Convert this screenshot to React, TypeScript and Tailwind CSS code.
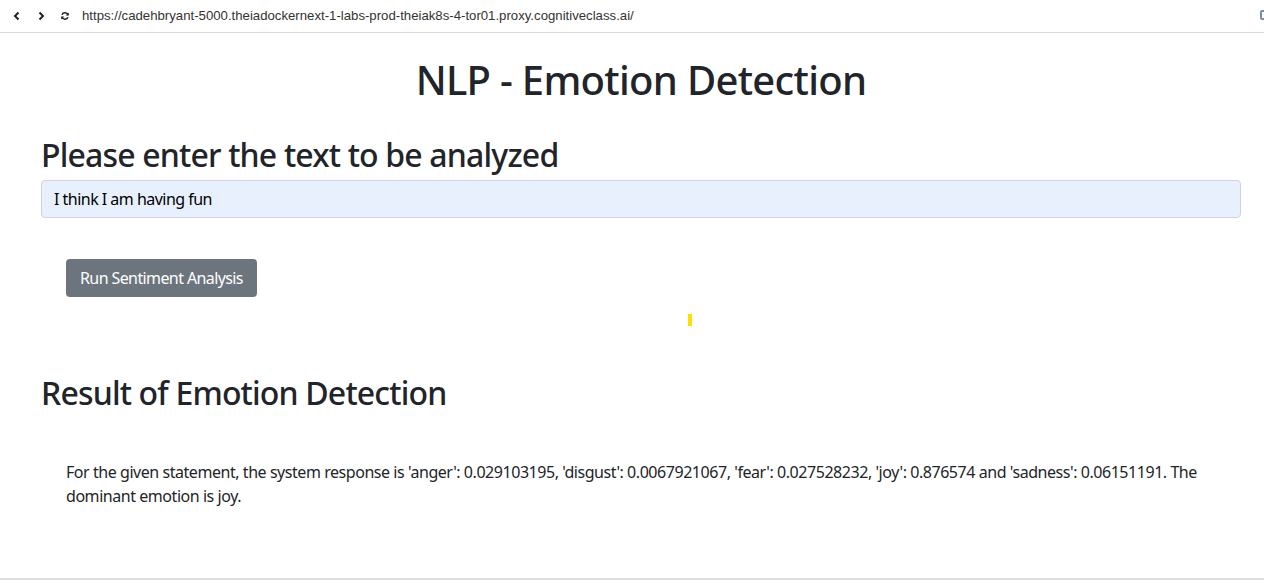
import React from 'react';

const font = { fontFamily: '"Noto Sans", "Open Sans", sans-serif' };

const BrowserBar: React.FC = () => (
  <div className="h-[33px] border-b border-[#dadada] flex items-center relative bg-white">
    <div className="flex items-center pl-[12px] gap-[14px] text-[#333]">
      <svg width="10" height="10" viewBox="0 0 10 10"><path d="M6.5 1.5 3 5l3.5 3.5" fill="none" stroke="#222" strokeWidth="2" /></svg>
      <svg width="10" height="10" viewBox="0 0 10 10"><path d="M3.5 1.5 7 5 3.5 8.5" fill="none" stroke="#222" strokeWidth="2" /></svg>
      <svg width="10" height="10" viewBox="0 0 10 10">
        <path d="M8 4A3.2 3.2 0 0 0 2 3.8" fill="none" stroke="#222" strokeWidth="1.6" />
        <path d="M2 6a3.2 3.2 0 0 0 6 .2" fill="none" stroke="#222" strokeWidth="1.6" />
        <path d="M8.8 1.5v3H5.8z" fill="#222" />
        <path d="M1.2 8.5v-3h3z" fill="#222" />
      </svg>
    </div>
    <span className="ml-[12px] text-[13.2px] text-[#333]" style={{ fontFamily: '"Liberation Sans", sans-serif' }}>
      https://cadehbryant-5000.theiadockernext-1-labs-prod-theiak8s-4-tor01.proxy.cognitiveclass.ai/
    </span>
    <div className="absolute right-[-6px] top-[10px] w-[10px] h-[10px] border-2 border-[#7a8aa8] rounded-[2px]" />
  </div>
);

export default function App() {
  return (
    <div className="w-[1264px] h-[588px] bg-white flex flex-col overflow-hidden text-[#212529]" style={font}>
      <BrowserBar />
      <div className="flex-1 pl-[41px] pr-[23px] border-b-2 border-[#dedede]">
        <h1 className="text-center text-[40px] font-medium leading-[1.2] mt-[23px] tracking-[-0.7px]">NLP - Emotion Detection</h1>
        <h2 className="text-[32px] font-medium leading-[1.2] mt-[32px] mb-[6px] tracking-[-0.83px]">Please enter the text to be analyzed</h2>
        <input
          readOnly
          value="I think I am having fun"
          className="w-full h-[38px] px-[12px] text-[16px] bg-[#e8f0fe] border border-[#ced4da] rounded-[4px] outline-none text-black tracking-[-0.52px]"
          style={font}
        />
        <div className="pl-[25px] mt-[41px]">
          <button className="h-[38px] px-[14px] bg-[#6c757d] text-white text-[16px] rounded-[4px] tracking-[-0.6px]" style={font}>
            Run Sentiment Analysis
          </button>
        </div>
        <div className="mt-[17px] pl-[647px]">
          <div className="w-[4px] h-[12px] bg-[#ffe100]" />
        </div>
        <h2 className="text-[32px] font-medium leading-[1.2] mt-[48px] tracking-[-0.83px]">Result of Emotion Detection</h2>
        <p className="pl-[25px] pr-[24px] mt-[47px] text-[16px] leading-[24px] tracking-[-0.45px]">
          For the given statement, the system response is 'anger': 0.029103195, 'disgust': 0.0067921067, 'fear': 0.027528232, 'joy': 0.876574 and 'sadness': 0.06151191. The dominant emotion is joy.
        </p>
      </div>
      <div className="h-[8px]" />
    </div>
  );
}
